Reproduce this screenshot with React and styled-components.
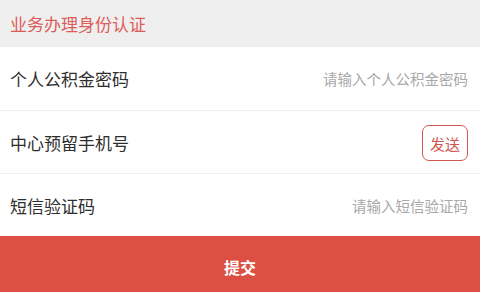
import * as React from "react"
import styled, {createGlobalStyle} from "styled-components"

const GlobalStyle = createGlobalStyle`
  body{
    margin: 0;
    padding: 0;
    background: #fff;
    font-family: "Noto Sans CJK SC", "Noto Sans", sans-serif;
  }
`

const Page = styled.div`
  width: 480px;
  height: 292px;
  display: flex;
  flex-direction: column;
  overflow: hidden;
`

const Header = styled.div`
  height: 47px;
  background: #efefef;
  display: flex;
  align-items: center;
  padding-left: 10px;
  color: #dc5c59;
  font-size: 17px;
`

const Row = styled.div`
  height: ${p => p.h}px;
  display: flex;
  align-items: center;
  justify-content: space-between;
  padding: 0 12px 0 10px;
  border-bottom: 1px solid #f1f1f1;
  box-sizing: border-box;
`

const Label = styled.span`
  font-size: 17px;
  color: #2e2e2e;
`

const Input = styled.input`
  border: none;
  outline: none;
  text-align: right;
  font-family: inherit;
  font-size: 14.5px;
  width: 200px;
  padding: 0;
  background: transparent;
  &::placeholder{
    color: #a8a8a8;
  }
`

const SendBtn = styled.button`
  width: 46px;
  height: 36px;
  border: 1.5px solid #d0574f;
  border-radius: 7px;
  background: #fff;
  color: #d0574f;
  font-family: inherit;
  font-size: 15px;
  padding: 0;
  margin-top: 2px;
`

const Submit = styled.button`
  flex: 1;
  border: none;
  background: #dc4f43;
  color: #fff;
  font-family: inherit;
  font-size: 16px;
  font-weight: 700;
  padding: 5px 0 0;
  margin-top: -1px;
`

const App = () => {
  return (
    <>
      <GlobalStyle />
      <Page>
        <Header>业务办理身份认证</Header>
        <Row h={64}>
          <Label>个人公积金密码</Label>
          <Input type="password" placeholder="请输入个人公积金密码" />
        </Row>
        <Row h={63}>
          <Label>中心预留手机号</Label>
          <SendBtn>发送</SendBtn>
        </Row>
        <Row h={63}>
          <Label>短信验证码</Label>
          <Input placeholder="请输入短信验证码" />
        </Row>
        <Submit>提交</Submit>
      </Page>
    </>
  )
}

export default App
